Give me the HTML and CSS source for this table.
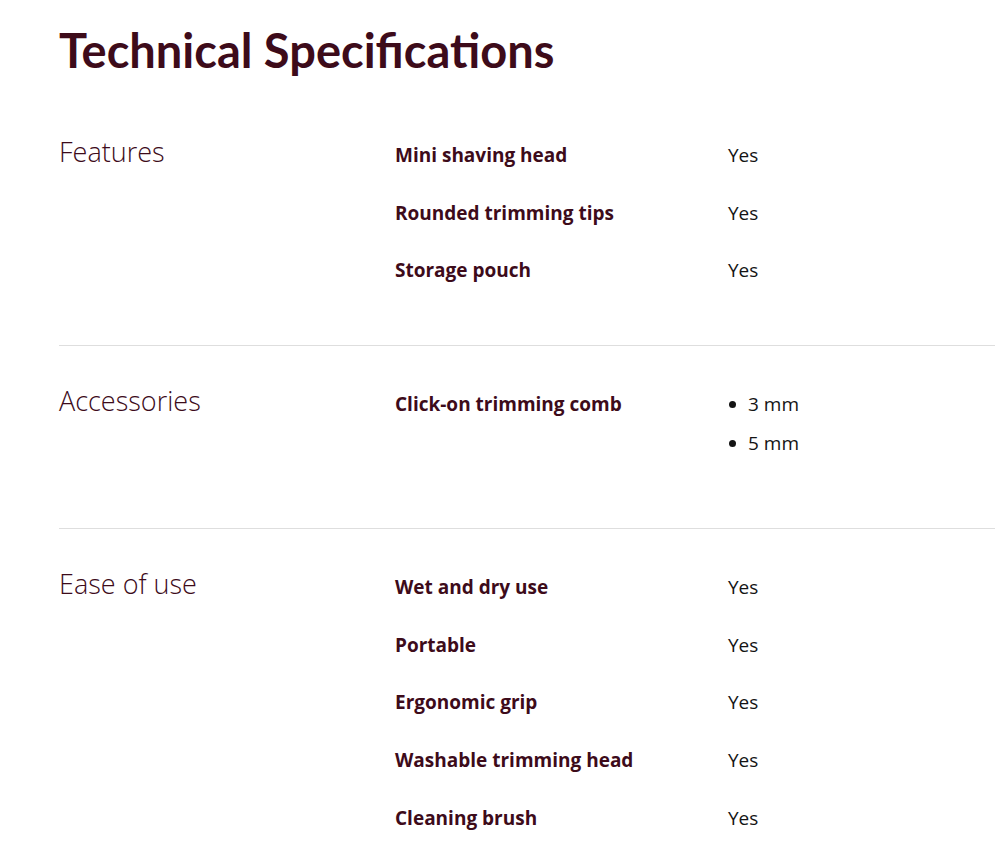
FILE: index.html
```html
<!DOCTYPE html>
<html lang="en">
<head>
<meta charset="utf-8">
<title>Technical Specifications</title>
<link rel="stylesheet" href="styles.css">
</head>
<body>
<main class="specs">
  <h1 class="specs-title">Technical Specifications</h1>

  <section class="spec-group">
    <h2 class="group-name">Features</h2>
    <div class="group-rows">
      <div class="spec-row"><div class="spec-label">Mini shaving head</div><div class="spec-value">Yes</div></div>
      <div class="spec-row"><div class="spec-label">Rounded trimming tips</div><div class="spec-value">Yes</div></div>
      <div class="spec-row"><div class="spec-label">Storage pouch</div><div class="spec-value">Yes</div></div>
    </div>
  </section>

  <section class="spec-group">
    <h2 class="group-name">Accessories</h2>
    <div class="group-rows">
      <div class="spec-row">
        <div class="spec-label">Click-on trimming comb</div>
        <ul class="spec-value value-list">
          <li>3 mm</li>
          <li>5 mm</li>
        </ul>
      </div>
    </div>
  </section>

  <section class="spec-group">
    <h2 class="group-name">Ease of use</h2>
    <div class="group-rows">
      <div class="spec-row"><div class="spec-label">Wet and dry use</div><div class="spec-value">Yes</div></div>
      <div class="spec-row"><div class="spec-label">Portable</div><div class="spec-value">Yes</div></div>
      <div class="spec-row"><div class="spec-label">Ergonomic grip</div><div class="spec-value">Yes</div></div>
      <div class="spec-row"><div class="spec-label">Washable trimming head</div><div class="spec-value">Yes</div></div>
      <div class="spec-row"><div class="spec-label">Cleaning brush</div><div class="spec-value">Yes</div></div>
    </div>
  </section>
</main>
</body>
</html>
```
FILE: styles.css
```css
html, body {
  margin: 0;
  padding: 0;
  background: #ffffff;
}

body {
  font-family: "Open Sans", "Noto Sans", sans-serif;
  color: #3d0b1a;
}

.specs {
  padding-left: 59px;
}

.specs-title {
  font-family: Lato, "Open Sans", sans-serif;
  font-weight: 700;
  font-size: 47px;
  line-height: 56px;
  margin: 22px 0 18px;
  color: #3d0b1a;
}

.spec-group {
  display: flex;
  align-items: baseline;
  padding: 40px 0 63px;
}

.spec-group + .spec-group {
  border-top: 1px solid #dedede;
  padding-top: 39px;
}

.group-name {
  flex: 0 0 336px;
  margin: 0;
  font-size: 27px;
  font-weight: 300;
  line-height: 32px;
  color: #3d0b1a;
}

.group-rows {
  flex: 1;
  display: flex;
  flex-direction: column;
  gap: 33.6px;
}

.spec-row {
  display: flex;
  align-items: baseline;
}

.spec-label {
  flex: 0 0 333px;
  font-size: 19px;
  font-weight: 700;
  line-height: 24px;
  color: #3d0b1a;
}

.spec-value {
  font-size: 19px;
  font-weight: 400;
  line-height: 24px;
  color: #141414;
}

.value-list {
  list-style: none;
  margin: 0 0 10px;
  padding: 0;
  display: flex;
  flex-direction: column;
  gap: 15px;
}

.value-list li {
  display: flex;
  align-items: baseline;
}

.value-list li::before {
  content: "";
  width: 7px;
  height: 7px;
  border-radius: 50%;
  background: #141414;
  margin-left: 1px;
  margin-right: 12px;
  flex: 0 0 auto;
  position: relative;
  top: -3px;
}
```
